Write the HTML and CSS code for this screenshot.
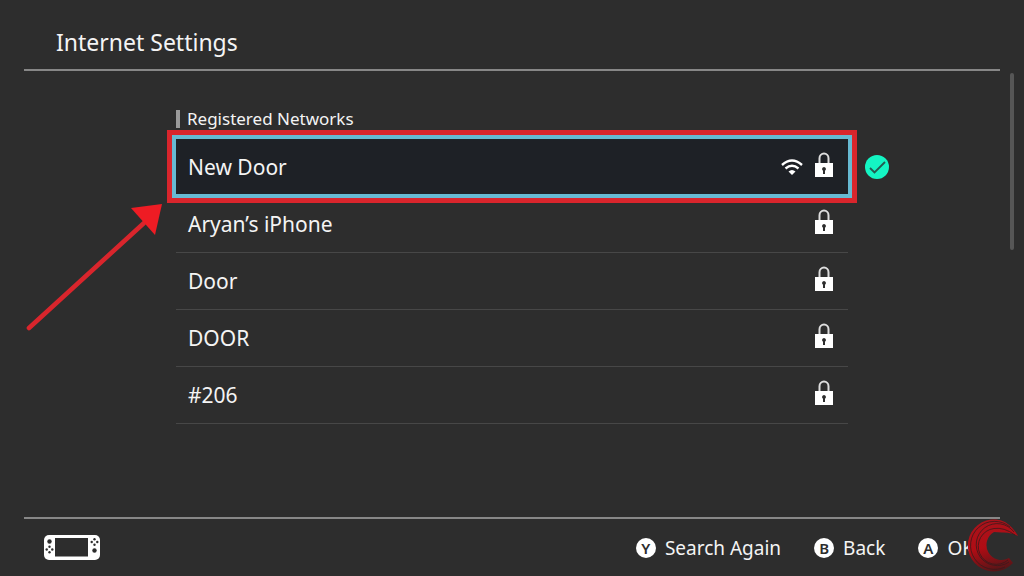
FILE: index.html
```html
<!DOCTYPE html>
<html lang="en">
<head>
<meta charset="utf-8">
<meta name="viewport" content="width=device-width, initial-scale=1">
<title>Internet Settings</title>
<link rel="stylesheet" href="styles.css">
</head>
<body>
<svg class="symbols" aria-hidden="true">
  <symbol id="lock" viewBox="0 0 20 26">
    <path d="M5.500 12V6.200a4.500 4.700 0 0 1 9 0V12" fill="none" stroke="#ddd" stroke-width="2"/>
    <path d="M1 11h18v14H1z" fill="#fff"/>
    <path d="M10 15a2 2 0 0 1 1 3.700V22H9v-3.300A2 2 0 0 1 10 15z" fill="#2d2d2d"/>
  </symbol>
</svg>
<div class="screen">
  <header class="header"><h1 class="title">Internet Settings</h1></header>
  <main class="main">
    <section class="networks">
      <h2 class="section-title">Registered Networks</h2>
      <ul class="list">
        <li class="item">
          <button class="row row-selected" type="button">
            <span class="name">New Door</span>
            <svg class="wifi" viewBox="0 0 24 18" role="img" aria-label="Signal strength">
              <path d="M2 7Q12-2 22 7M5.500 10.500Q12 5 18.500 10.500" fill="none" stroke="#fff" stroke-width="2.400"/>
              <path d="M8.500 13.500Q12 10.500 15.500 13.500L12 17z" fill="#fff"/>
            </svg>
            <svg class="lock" role="img" aria-label="Secured"><use href="#lock"/></svg>
          </button>
          <svg class="check" viewBox="0 0 24 24" role="img" aria-label="Connected">
            <circle cx="12" cy="12" r="12" fill="#14f5c3"/>
            <path d="M5 13l4.500 4.500L20 7" fill="none" stroke="#245a50" stroke-width="1.800"/>
          </svg>
          <svg class="arrow" viewBox="0 0 140 130" aria-hidden="true">
            <path d="M5 124L120 19" stroke="#d9252c" stroke-width="4.600" stroke-linecap="round"/>
            <path d="M138 0L107 4l24 27z" fill="#ee1c24"/>
          </svg>
        </li>
        <li class="item"><button class="row" type="button"><span class="name">Aryan’s iPhone</span><svg class="lock" role="img" aria-label="Secured"><use href="#lock"/></svg></button></li>
        <li class="item"><button class="row" type="button"><span class="name">Door</span><svg class="lock" role="img" aria-label="Secured"><use href="#lock"/></svg></button></li>
        <li class="item"><button class="row" type="button"><span class="name">DOOR</span><svg class="lock" role="img" aria-label="Secured"><use href="#lock"/></svg></button></li>
        <li class="item"><button class="row" type="button"><span class="name">#206</span><svg class="lock" role="img" aria-label="Secured"><use href="#lock"/></svg></button></li>
      </ul>
    </section>
    <div class="scrollbar"></div>
  </main>
  <footer class="footer">
    <svg class="console" viewBox="0 0 56 25" role="img" aria-label="Console">
      <rect width="56" height="25" rx="5" fill="#fff"/>
      <g fill="#2d2d2d">
        <path d="M11 3h33v18.500H11z"/>
        <circle cx="5.500" cy="6.500" r="2.200"/><circle cx="50.500" cy="15.500" r="2.200"/>
        <circle cx="5.500" cy="11.700" r="1.200"/><circle cx="5.500" cy="17.300" r="1.200"/><circle cx="2.700" cy="14.500" r="1.200"/><circle cx="8.300" cy="14.500" r="1.200"/>
        <circle cx="50.500" cy="4.200" r="1.200"/><circle cx="50.500" cy="9.800" r="1.200"/><circle cx="47.700" cy="7" r="1.200"/><circle cx="53.300" cy="7" r="1.200"/>
      </g>
    </svg>
    <div class="actions">
      <button class="action" type="button"><span class="key">Y</span>Search Again</button>
      <button class="action" type="button"><span class="key">B</span>Back</button>
      <button class="action" type="button"><span class="key">A</span>OK</button>
    </div>
    <svg class="brand" viewBox="0 0 54 54" aria-hidden="true">
      <defs>
        <linearGradient id="brand-red" gradientUnits="userSpaceOnUse" x1="20" y1="0" x2="34" y2="54">
          <stop offset="0" stop-color="#a8141c"/>
          <stop offset=".5" stop-color="#b00c14"/>
          <stop offset="1" stop-color="#4f1618"/>
        </linearGradient>
      </defs>
      <path d="M52 18Q45 14 36 14.500L28 14A14.500 14.500 0 1 0 43 40L47 45A26 26 0 1 1 39 4Q47 9 52 18z" fill="url(#brand-red)"/>
      <g fill="none" stroke="#3a1a1c" stroke-width=".8">
        <path d="M44 9A24 24 0 1 0 39 49"/>
        <path d="M48 14A21 21 0 1 0 43 44"/>
        <path d="M49 17Q38 9 28 10.500A18 18 0 1 0 42 42"/>
      </g>
    </svg>
  </footer>
</div>
</body>
</html>
```
FILE: styles.css
```css
* { box-sizing: border-box; }
body {
  margin: 0;
  background: #2d2d2d;
  color: #f4f4f4;
  font-family: "Noto Sans", "Open Sans", sans-serif;
}
button {
  border: 0;
  background: none;
  color: inherit;
  font: inherit;
  text-align: left;
}
.symbols { position: absolute; width: 0; height: 0; }
.screen {
  display: flex;
  flex-direction: column;
  min-height: 100vh;
  padding: 0 24px;
}
.header {
  padding: 25px 32px 10px;
  border-bottom: 2px solid #878787;
}
.title {
  margin: 0;
  font-size: 23px;
  font-weight: 400;
  line-height: 34px;
}
.main {
  position: relative;
  flex: 1;
  padding: 36px 152px 0;
}
.section-title {
  display: flex;
  align-items: center;
  gap: 7px;
  margin: 0 0 8px;
  font-size: 17px;
  font-weight: 400;
  line-height: 24px;
}
.section-title::before {
  content: "";
  width: 4px;
  height: 18px;
  background: #9a9a9a;
}
.list { margin: 0; padding: 0; list-style: none; }
.item { position: relative; }
.row {
  display: flex;
  align-items: center;
  gap: 14px;
  width: 100%;
  height: 57px;
  padding: 0 14px 0 12px;
  border-bottom: 1px solid #474747;
  font-size: 21px;
}
.item:first-child { padding-bottom: 2px; }
.row-selected {
  gap: 10px;
  height: 55px;
  border-bottom: 0;
  background: #1e2126;
  box-shadow: 0 0 0 4px #66b9d2, 0 0 0 9px #d9252c;
}
.name { flex: 1; }
.lock { width: 20px; height: 26px; margin-bottom: 4px; }
.wifi { width: 24px; height: 18px; }
.check {
  position: absolute;
  top: 16px;
  right: -41px;
  width: 24px;
  height: 24px;
}
.arrow {
  position: absolute;
  top: 65px;
  right: calc(100% + 12px);
  width: 140px;
  height: 130px;
}
.scrollbar {
  position: absolute;
  top: 2px;
  right: -14px;
  width: 4px;
  height: 177px;
  border-radius: 2px;
  background: #565656;
}
.footer {
  position: relative;
  display: flex;
  align-items: center;
  justify-content: space-between;
  height: 59px;
  padding: 0 26px 0 20px;
  border-top: 2px solid #878787;
}
.console { width: 56px; height: 25px; }
.actions { display: flex; gap: 33px; }
.action {
  display: flex;
  align-items: center;
  gap: 9px;
  padding: 0;
  font-size: 19px;
}
.key {
  width: 20px;
  height: 20px;
  border-radius: 50%;
  background: #fff;
  color: #2d2d2d;
  font-size: 15px;
  font-weight: 600;
  line-height: 20px;
  text-align: center;
}
.brand {
  position: absolute;
  right: -20px;
  bottom: 4px;
  width: 54px;
  height: 54px;
}
```
